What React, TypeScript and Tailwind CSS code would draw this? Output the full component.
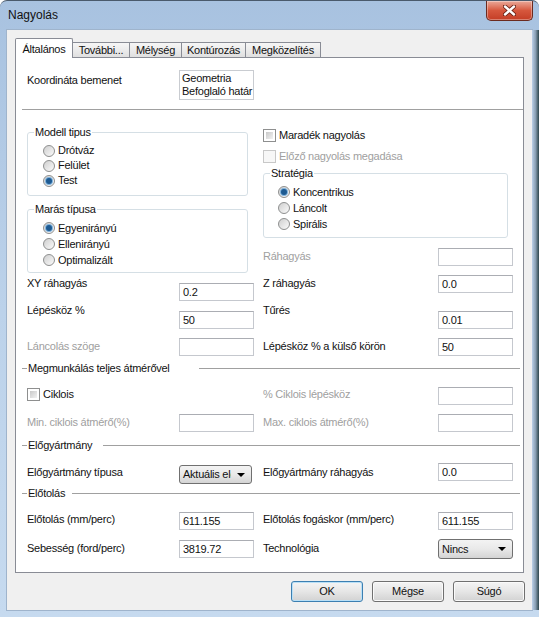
import React from 'react'

const DIS = 'text-[#a0a0a0]'

function Box({ value = '', className = '' }: { value?: string; className?: string }) {
  return (
    <div
      className={`w-[75px] h-[18px] shrink-0 border border-[#c5c8ce] border-t-[#abadb3] bg-white pl-[3px] leading-[16px] whitespace-nowrap overflow-hidden ${className}`}
    >
      {value}
    </div>
  )
}

function Combo({ value, className = '' }: { value: string; className?: string }) {
  return (
    <div
      className={`flex items-center shrink-0 border border-[#707070] rounded-[3px] bg-linear-to-b from-[#f3f3f3] via-[#e9e9e9] to-[#d4d4d4] ${className}`}
    >
      <span className="flex-1 min-w-0 pl-[3px] whitespace-nowrap overflow-hidden">{value}</span>
      <svg width="8" height="4" viewBox="0 0 8 4" className="mx-[6px] shrink-0">
        <path d="M0 0h8L4 4z" fill="#000" />
      </svg>
    </div>
  )
}

function Radio({ checked }: { checked?: boolean }) {
  return (
    <span className="w-[12px] h-[12px] shrink-0 rounded-full border border-[#8e8f8f] bg-linear-to-br from-[#cfcfcf] to-[#fbfbfb] flex items-center justify-center">
      {checked && <span className="w-[6px] h-[6px] rounded-full bg-[#1d5a92] shadow-[0_0_0_1px_#7fb2dc]" />}
    </span>
  )
}

function Check({ disabled }: { disabled?: boolean }) {
  return (
    <span
      className={`w-[13px] h-[13px] shrink-0 border p-[2px] ${
        disabled ? 'border-[#c8c8c8] bg-[#f7f7f7]' : 'border-[#8e8f8f] bg-white'
      }`}
    >
      {!disabled && <span className="block w-full h-full bg-linear-to-br from-[#c9c9c9] to-[#f2f2f2]" />}
    </span>
  )
}

function RadioRow({ label, checked, h, pl }: { label: string; checked?: boolean; h: string; pl: string }) {
  return (
    <div className={`flex items-center ${h} ${pl}`}>
      <Radio checked={checked} />
      <span className="ml-[3px]">{label}</span>
    </div>
  )
}

function Group({
  title,
  className,
  children,
}: {
  title: string
  className: string
  children: React.ReactNode
}) {
  return (
    <fieldset className={`border border-[#d5dfe5] rounded-[3px] ${className}`}>
      <legend className="ml-[6px] px-[1px] leading-[13px]">{title}</legend>
      {children}
    </fieldset>
  )
}

function Sep({ title, w, className }: { title: string; w: string; className: string }) {
  return (
    <div className={`flex items-center pl-[6px] pr-[3px] h-[13px] ${className}`}>
      <div className="w-[5px] h-px bg-[#a0a0a0]" />
      <span className={`ml-[1px] whitespace-nowrap ${w}`}>{title}</span>
      <div className="flex-1 h-px bg-[#a0a0a0]" />
    </div>
  )
}

type CellProps = {
  label: React.ReactNode
  labelMt: string
  box?: React.ReactNode
  disabled?: boolean
}

function Row({ h, left, right }: { h: string; left: CellProps; right: CellProps }) {
  return (
    <div className={`flex pl-[11px] ${h}`}>
      <div className="w-[227px] flex items-start">
        <span className={`${left.labelMt} ${left.disabled ? DIS : ''} whitespace-nowrap`}>{left.label}</span>
        <div className="ml-auto">{left.box}</div>
      </div>
      <div className="ml-[9px] w-[250px] flex items-start">
        <span className={`${right.labelMt} ${right.disabled ? DIS : ''} whitespace-nowrap`}>{right.label}</span>
        <div className="ml-auto">{right.box}</div>
      </div>
    </div>
  )
}

function Tabs() {
  const others = [
    { t: 'További...', w: 'w-[58px]' },
    { t: 'Mélység', w: 'w-[53px]' },
    { t: 'Kontúrozás', w: 'w-[65px]' },
    { t: 'Megközelítés', w: 'w-[76px]' },
  ]
  return (
    <div className="flex items-end h-[19px] ml-[8px]">
      <div className="relative z-10 -mb-px w-[58px] h-[20px] bg-white border border-b-0 border-[#898c95] rounded-t-[2px] pt-[4px] text-center">
        Általános
      </div>
      {others.map((o) => (
        <div
          key={o.t}
          className={`-ml-px h-[15px] pt-[1px] text-center border border-b-0 border-[#898c95] bg-linear-to-b from-[#f6f6f6] to-[#e0e0e0] whitespace-nowrap ${o.w}`}
        >
          {o.t}
        </div>
      ))}
    </div>
  )
}

function Button({ label, def }: { label: string; def?: boolean }) {
  return (
    <div
      className={`w-[72px] h-[21px] flex items-center justify-center rounded-[3px] border bg-linear-to-b from-[#f4f4f4] via-[#e6e6e6] to-[#d2d2d2] ${
        def ? 'border-[#3c7fb1] shadow-[inset_0_0_0_1px_#b9e0f7]' : 'border-[#707070] shadow-[inset_0_0_0_1px_#fafafa]'
      }`}
    >
      {label}
    </div>
  )
}

function CloseButton() {
  return (
    <div className="ml-auto mr-[6px] w-[47px] h-[20px] flex items-center justify-center rounded-b-[5px] border border-t-0 border-[#6b2a1f] bg-linear-to-b from-[#e9a899] via-[#d6573d] to-[#c43d25] shadow-[inset_0_0_0_1px_rgba(255,255,255,0.35)]">
      <svg width="13" height="11" viewBox="0 0 13 11">
        <path d="M2 1.5l9 8M11 1.5l-9 8" stroke="#6a2216" strokeWidth="4.2" strokeLinecap="round" />
        <path d="M2 1.5l9 8M11 1.5l-9 8" stroke="#ffffff" strokeWidth="2.4" strokeLinecap="round" />
      </svg>
    </div>
  )
}

export default function App() {
  return (
    <div className="w-[539px] h-[617px] flex flex-col overflow-hidden rounded-t-[7px] border-t border-[#4a5a6c] bg-linear-to-b from-[#a8c2e0] via-[#bcd2ea] to-[#c6daef] font-['Liberation_Sans',Arial,sans-serif] text-[11px] leading-[13px] tracking-[-0.25px] text-[#111]">
      {/* title bar */}
      <div className="h-[29px] flex items-start">
        <span className="ml-[8px] mt-[7px] text-[12px] leading-[14px] tracking-normal">Nagyolás</span>
        <CloseButton />
      </div>

      <div className="flex h-[580px]">
        <div className="w-[7px]" />
        <div className="w-[525px] bg-[#f0f0f0] flex flex-col pt-[8px] shadow-[0_0_0_1px_#9fb4cc]">
          <Tabs />
          <div className="ml-[8px] w-[509px] h-[516px] border border-[#898c95] bg-white flex flex-col">
            {/* Koordináta bemenet */}
            <div className="flex pl-[11px] mt-[12px]">
              <span className="mt-[4px] w-[152px]">Koordináta bemenet</span>
              <div className="w-[75px] h-[30px] border border-[#c9ccd1] pl-[2px] pt-[1px] overflow-hidden whitespace-nowrap">
                <div>Geometria</div>
                <div>Befoglaló határ</div>
              </div>
            </div>
            <div className="mt-[9px] ml-[6px] h-px bg-[#a0a0a0]" />

            {/* groups */}
            <div className="flex pl-[11px]">
              <div className="w-[221px]">
                <Group title="Modell tipus" className="mt-[16px] w-[221px] pt-[4px] pb-[7px]">
                  <RadioRow label="Drótváz" h="h-[15px]" pl="pl-[15px]" />
                  <RadioRow label="Felület" h="h-[15px]" pl="pl-[15px]" />
                  <RadioRow label="Test" checked h="h-[15px]" pl="pl-[15px]" />
                </Group>
                <Group title="Marás típusa" className="mt-[7px] w-[221px] pt-[4px] pb-[4px]">
                  <RadioRow label="Egyenirányú" checked h="h-[16px]" pl="pl-[15px]" />
                  <RadioRow label="Ellenirányú" h="h-[16px]" pl="pl-[15px]" />
                  <RadioRow label="Optimalizált" h="h-[16px]" pl="pl-[15px]" />
                </Group>
              </div>
              <div className="ml-[15px] w-[250px]">
                <div className="mt-[18px] h-[15px] flex items-center">
                  <Check />
                  <span className="ml-[3px]">Maradék nagyolás</span>
                </div>
                <div className="mt-[6px] h-[15px] flex items-center">
                  <Check disabled />
                  <span className={`ml-[3px] ${DIS}`}>Előző nagyolás megadása</span>
                </div>
                <Group title="Stratégia" className="mt-[3px] w-[245px] pt-[4px] pb-[5px]">
                  <RadioRow label="Koncentrikus" checked h="h-[16px]" pl="pl-[14px]" />
                  <RadioRow label="Láncolt" h="h-[16px]" pl="pl-[14px]" />
                  <RadioRow label="Spirális" h="h-[16px]" pl="pl-[14px]" />
                </Group>
                <div className="mt-[10px] flex items-start">
                  <span className={`mt-[2px] ${DIS}`}>Ráhagyás</span>
                  <Box className="ml-auto" />
                </div>
              </div>
            </div>

            <Row
              h="h-[29px]"
              left={{ label: 'XY ráhagyás', labelMt: 'mt-[4px]', box: <Box value="0.2" className="mt-[10px]" /> }}
              right={{ label: 'Z ráhagyás', labelMt: 'mt-[4px]', box: <Box value="0.0" className="mt-[2px]" /> }}
            />
            <Row
              h="h-[28px]"
              left={{ label: 'Lépésköz %', labelMt: 'mt-[2px]', box: <Box value="50" className="mt-[9px]" /> }}
              right={{ label: 'Tűrés', labelMt: 'mt-[2px]', box: <Box value="0.01" className="mt-[9px]" /> }}
            />
            <Row
              h="h-[28px]"
              left={{ label: 'Láncolás szöge', labelMt: 'mt-[10px]', disabled: true, box: <Box className="mt-[8px]" /> }}
              right={{
                label: 'Lépésköz % a külső körön',
                labelMt: 'mt-[10px]',
                box: <Box value="50" className="mt-[8px]" />,
              }}
            />

            <Sep title="Megmunkálás teljes átmérővel" w="w-[171px]" className="mt-[4px]" />
            <Row
              h="h-[31px]"
              left={{
                label: (
                  <span className="flex items-center h-[13px]">
                    <Check />
                    <span className="ml-[3px]">Ciklois</span>
                  </span>
                ),
                labelMt: 'mt-[13px]',
              }}
              right={{
                label: '% Ciklois lépésköz',
                labelMt: 'mt-[13px]',
                disabled: true,
                box: <Box className="mt-[12px]" />,
              }}
            />
            <Row
              h="h-[27px]"
              left={{ label: 'Min. ciklois átmérő(%)', labelMt: 'mt-[10px]', disabled: true, box: <Box className="mt-[8px]" /> }}
              right={{ label: 'Max. ciklois átmérő(%)', labelMt: 'mt-[10px]', disabled: true, box: <Box className="mt-[8px]" /> }}
            />

            <Sep title="Előgyártmány" w="w-[75px]" className="mt-[6px]" />
            <Row
              h="h-[32px]"
              left={{
                label: 'Előgyártmány típusa',
                labelMt: 'mt-[14px]',
                box: <Combo value="Aktuális előgyártmány" className="mt-[13px] mr-[2px] w-[73px] h-[19px]" />,
              }}
              right={{ label: 'Előgyártmány ráhagyás', labelMt: 'mt-[14px]', box: <Box value="0.0" className="mt-[11px]" /> }}
            />

            <Sep title="Előtolás" w="w-[44px]" className="mt-[3px]" />
            <Row
              h="h-[30px]"
              left={{ label: 'Előtolás (mm/perc)', labelMt: 'mt-[13px]', box: <Box value="611.155" className="mt-[12px]" /> }}
              right={{
                label: 'Előtolás fogáskor (mm/perc)',
                labelMt: 'mt-[13px]',
                box: <Box value="611.155" className="mt-[12px]" />,
              }}
            />
            <Row
              h="h-[30px]"
              left={{ label: 'Sebesség (ford/perc)', labelMt: 'mt-[12px]', box: <Box value="3819.72" className="mt-[10px]" /> }}
              right={{
                label: 'Technológia',
                labelMt: 'mt-[12px]',
                box: <Combo value="Nincs" className="mt-[9px] w-[75px] h-[20px]" />,
              }}
            />
          </div>

          <div className="mt-[8px] flex justify-end gap-[9px] pr-[7px]">
            <Button label="OK" def />
            <Button label="Mégse" />
            <Button label="Súgó" />
          </div>
        </div>
        <div className="w-[7px] bg-linear-to-r from-[#bcd1e8] via-[#8aa0b4] to-[#2f474d]" />
      </div>
      <div className="h-[7px]" />
    </div>
  )
}
